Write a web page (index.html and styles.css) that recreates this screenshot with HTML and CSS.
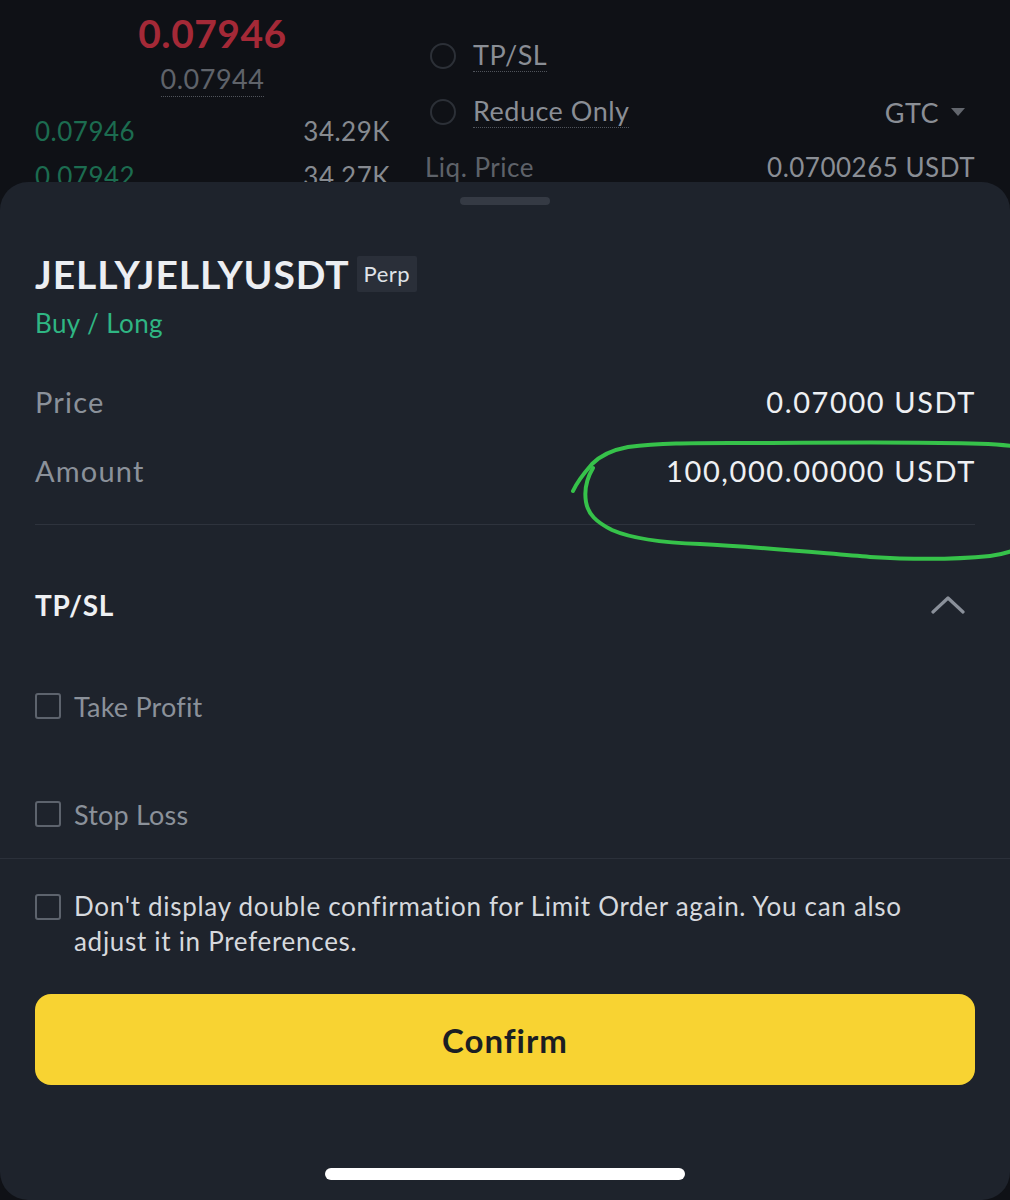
FILE: index.html
```html
<!DOCTYPE html>
<html lang="en">
<head>
  <meta charset="UTF-8">
  <meta name="viewport" content="width=device-width, initial-scale=1.0">
  <title>Confirm Order</title>
  <link rel="stylesheet" href="styles.css">
</head>
<body>
  <div class="page">
    <!-- Dimmed trading screen behind the sheet -->
    <div class="backdrop">
      <div class="book">
        <div class="last-price">0.07946</div>
        <div class="mark-price"><span class="dotted">0.07944</span></div>
        <div class="book-row"><span class="bid">0.07946</span><span>34.29K</span></div>
        <div class="book-row"><span class="bid">0.07942</span><span>34.27K</span></div>
      </div>
      <div class="options">
        <div class="opt-row">
          <span class="radio"></span><span class="dotted">TP/SL</span>
        </div>
        <div class="opt-row">
          <span class="radio"></span><span class="dotted">Reduce Only</span>
          <span class="gtc">GTC <span class="tri"></span></span>
        </div>
        <div class="opt-row liq">
          <span>Liq. Price</span><span class="liq-val">0.0700265 USDT</span>
        </div>
      </div>
    </div>

    <!-- Confirmation sheet -->
    <div class="sheet">
      <div class="handle"></div>

      <div class="sheet-head">
        <h1 class="symbol">JELLYJELLYUSDT</h1>
        <span class="badge">Perp</span>
      </div>
      <div class="side">Buy / Long</div>

      <div class="info-row">
        <span class="label">Price</span>
        <span class="value">0.07000 USDT</span>
      </div>
      <div class="info-row">
        <span class="label">Amount</span>
        <span class="value">100,000.00000 USDT</span>
      </div>
      <div class="divider"></div>

      <div class="tpsl-head">
        <span>TP/SL</span>
        <svg class="chevron" width="34" height="20" viewBox="0 0 34 20">
          <path d="M2 17 L17 3 L32 17" fill="none" stroke="#8a909a" stroke-width="3.2" stroke-linecap="round" stroke-linejoin="round"/>
        </svg>
      </div>

      <label class="check-row take">
        <span class="box"></span><span>Take Profit</span>
      </label>
      <label class="check-row stop">
        <span class="box"></span><span>Stop Loss</span>
      </label>

      <div class="full-divider"></div>

      <label class="pref">
        <span class="box"></span>
        <span class="pref-text">Don't display double confirmation for Limit Order again. You can also adjust it in Preferences.</span>
      </label>

      <button class="confirm">Confirm</button>

      <div class="home-bar"></div>
    </div>

    <!-- hand-drawn marker around the amount -->
    <svg class="scribble" width="1010" height="1200" viewBox="0 0 1010 1200">
      <path d="M573 491 C578 480 585 472 592 464 C600 456 612 450 628 447 C660 443 690 443 730 443 C800 443 880 442 940 443 C975 443 995 444 1012 446"
            fill="none" stroke="#36c24a" stroke-width="4" stroke-linecap="round"/>
      <path d="M593 468 C587 478 584 490 586 502 C588 514 596 522 612 530 C635 540 670 543 700 544 C760 547 820 553 870 557 C920 560 960 559 990 556 C1000 555 1006 553 1012 551"
            fill="none" stroke="#36c24a" stroke-width="4" stroke-linecap="round"/>
    </svg>
  </div>
</body>
</html>
```

FILE: styles.css
```css
body {
  margin: 0;
  background-color: #0f1116;
  font-family: "Lato", "Noto Sans", sans-serif;
  overflow: hidden;
}
.page {
  position: relative;
  width: 1010px;
  height: 1200px;
  overflow: hidden;
}

/* backdrop */
.backdrop {
  height: 182px;
  overflow: hidden;
  display: grid;
  grid-template-columns: 355px 1fr;
  column-gap: 35px;
  padding: 0 35px;
  color: #868a90;
  letter-spacing: 0.5px;
}
.book {
  padding-top: 10px;
}
.last-price {
  text-align: center;
  color: #a42937;
  font-weight: 700;
  font-size: 39px;
  line-height: 46px;
}
.mark-price {
  text-align: center;
  color: #5f636a;
  font-size: 27px;
  line-height: 46px;
}
.dotted {
  border-bottom: 1.5px dotted #50545b;
  padding-bottom: 1px;
}
.book-row {
  display: flex;
  justify-content: space-between;
  font-size: 26px;
  line-height: 45px;
}
.mark-price + .book-row {
  margin-top: 7px;
}
.bid {
  color: #1c6c50;
}
.options {
  padding-top: 28px;
}
.opt-row {
  display: flex;
  align-items: center;
  height: 56px;
  font-size: 27px;
  color: #8a8e95;
}
.opt-row .dotted {
  line-height: 30px;
}
.radio {
  width: 22px;
  height: 22px;
  border: 2px solid #2c3037;
  border-radius: 50%;
  margin: 0 17px 0 5px;
}
.gtc {
  margin-left: auto;
  margin-right: 10px;
  display: flex;
  align-items: center;
  gap: 12px;
}
.tri {
  width: 0;
  height: 0;
  border-left: 7px solid transparent;
  border-right: 7px solid transparent;
  border-top: 8px solid #62666d;
}
.liq {
  justify-content: space-between;
  align-items: flex-start;
  height: 42px;
  padding-top: 9px;
  box-sizing: border-box;
  line-height: 36px;
  color: #5e6269;
  font-size: 26px;
}
.liq-val {
  color: #8a8e95;
}

/* sheet */
.sheet {
  height: 1018px;
  box-sizing: border-box;
  background-color: #1e232c;
  border-radius: 28px;
  padding: 0 35px;
  display: flex;
  flex-direction: column;
}
.handle {
  align-self: center;
  width: 90px;
  height: 8px;
  border-radius: 4px;
  background-color: #353a44;
  margin-top: 15px;
}
.sheet-head {
  display: flex;
  align-items: center;
  gap: 7px;
  margin-top: 46px;
  height: 46px;
}
.symbol {
  margin: 0;
  font-size: 39px;
  font-weight: 700;
  color: #eceef2;
  letter-spacing: 0.9px;
}
.badge {
  background-color: #2a2f39;
  color: #dfe2e7;
  font-size: 22px;
  letter-spacing: 0.5px;
  padding: 0 7px;
  height: 36px;
  line-height: 36px;
  border-radius: 2px;
}
.side {
  color: #2fb683;
  font-size: 26px;
  letter-spacing: 0.4px;
  line-height: 34px;
  margin-top: 9px;
}
.info-row {
  display: flex;
  justify-content: space-between;
  align-items: center;
  height: 69px;
  font-size: 29px;
  letter-spacing: 1.2px;
}
.side + .info-row {
  margin-top: 27px;
}
.label {
  color: #8b919a;
}
.value {
  color: #eef0f3;
  letter-spacing: 1.6px;
  margin-right: -1px;
}
.divider {
  height: 1px;
  background-color: #2e333d;
  margin-top: 19px;
}
.tpsl-head {
  display: flex;
  justify-content: space-between;
  align-items: center;
  height: 56px;
  margin-top: 52px;
  color: #eef0f3;
  font-size: 28px;
  font-weight: 700;
  letter-spacing: 0.6px;
}
.chevron {
  margin-right: 10px;
}
.check-row {
  display: flex;
  align-items: center;
  gap: 13px;
  height: 56px;
  font-size: 27px;
  letter-spacing: 0.2px;
  color: #8b919a;
}
.take {
  margin-top: 45px;
}
.stop {
  margin-top: 52px;
}
.box {
  flex: none;
  width: 22px;
  height: 22px;
  border: 2px solid #5d636d;
  border-radius: 3px;
}
.full-divider {
  height: 1px;
  background-color: #2b303a;
  margin: 16px -35px 0;
}
.pref {
  display: flex;
  align-items: flex-start;
  gap: 13px;
  margin-top: 30px;
  padding-right: 20px;
  font-size: 26px;
  letter-spacing: 0.7px;
  line-height: 35px;
  color: #d6d9de;
}
.pref .box {
  margin-top: 5px;
}
.pref-text {
  max-width: 840px;
}
.confirm {
  margin-top: 35px;
  height: 91px;
  border: none;
  border-radius: 16px;
  background-color: #f8d332;
  color: #1b1e23;
  font-family: inherit;
  font-size: 33px;
  font-weight: 700;
  letter-spacing: 1px;
}
.home-bar {
  align-self: center;
  width: 360px;
  height: 12px;
  border-radius: 6px;
  background-color: #ffffff;
  margin-top: 83px;
}

.scribble {
  position: absolute;
  left: 0;
  top: 0;
  pointer-events: none;
}
```
